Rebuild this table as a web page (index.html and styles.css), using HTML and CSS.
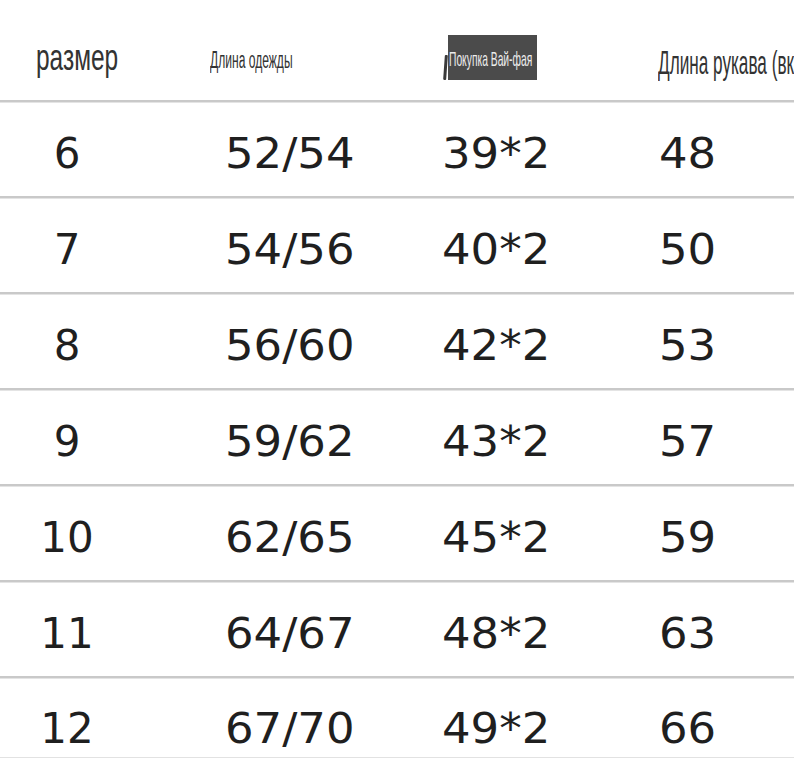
FILE: index.html
```html
<!DOCTYPE html>
<html lang="ru">
<head>
<meta charset="utf-8">
<title>Размеры</title>
<link rel="stylesheet" href="styles.css">
</head>
<body>
<div class="table">
  <div class="row head">
    <div class="cell h1"><span class="cond c-size">размер</span></div>
    <div class="cell h2"><span class="cond c-len">Длина одежды</span></div>
    <div class="cell h3"><span class="tag"><span class="cond c-tag">Покупка Вай-фая</span></span></div>
    <div class="cell h4"><span class="cond c-sleeve">Длина рукава (вк</span></div>
  </div>
  <div class="row"><div class="cell d1"><span class="num">6</span></div><div class="cell d2"><span class="num">52/54</span></div><div class="cell d3"><span class="num">39*2</span></div><div class="cell d4"><span class="num">48</span></div></div>
  <div class="row"><div class="cell d1"><span class="num">7</span></div><div class="cell d2"><span class="num">54/56</span></div><div class="cell d3"><span class="num">40*2</span></div><div class="cell d4"><span class="num">50</span></div></div>
  <div class="row"><div class="cell d1"><span class="num">8</span></div><div class="cell d2"><span class="num">56/60</span></div><div class="cell d3"><span class="num">42*2</span></div><div class="cell d4"><span class="num">53</span></div></div>
  <div class="row"><div class="cell d1"><span class="num">9</span></div><div class="cell d2"><span class="num">59/62</span></div><div class="cell d3"><span class="num">43*2</span></div><div class="cell d4"><span class="num">57</span></div></div>
  <div class="row"><div class="cell d1"><span class="num">10</span></div><div class="cell d2"><span class="num">62/65</span></div><div class="cell d3"><span class="num">45*2</span></div><div class="cell d4"><span class="num">59</span></div></div>
  <div class="row"><div class="cell d1"><span class="num">11</span></div><div class="cell d2"><span class="num">64/67</span></div><div class="cell d3"><span class="num">48*2</span></div><div class="cell d4"><span class="num">63</span></div></div>
  <div class="row last"><div class="cell d1"><span class="num">12</span></div><div class="cell d2"><span class="num">67/70</span></div><div class="cell d3"><span class="num">49*2</span></div><div class="cell d4"><span class="num">66</span></div></div>
</div>
</body>
</html>
```
FILE: styles.css
```css
html, body {
  margin: 0;
  padding: 0;
  background: #ffffff;
  overflow: hidden;
}
.table {
  width: 794px;
  display: flex;
  flex-direction: column;
}
.row {
  display: grid;
  grid-template-columns: 200px 230px 220px 1fr;
  height: 93px;
  border-bottom: 2px solid #c9c9c9;
  box-shadow: 0 1px 0 #e4e4e4;
  margin-bottom: 1px;
  align-items: center;
  font-family: "DejaVu Sans", Verdana, sans-serif;
  font-size: 42px;
  color: #1f1f1f;
  white-space: nowrap;
  overflow: hidden;
}
.row.head {
  height: 100px;
  align-items: start;
  font-family: "Liberation Sans", Arial, sans-serif;
  font-size: 16px;
  color: #333333;
}
.row.last {
  height: 78px;
  border-bottom: 1px solid #e2e2e2;
  box-shadow: none;
  align-items: start;
}
.cell {
  line-height: 1;
}
.num {
  display: inline-block;
}
.d1 {
  text-align: center;
  padding-right: 66px;
  padding-top: 8px;
}
.d2, .d3, .d4 { padding-top: 8px; }
.d2 .num, .d3 .num, .d4 .num {
  transform: scaleX(1.07);
  transform-origin: left center;
}
.d2 { padding-left: 25px; }
.d3 { padding-left: 12px; }
.d4 { padding-left: 9px; }
.last .cell { padding-top: 29px; }

.cond {
  display: block;
  width: max-content;
  line-height: 1;
  transform-origin: left center;
  white-space: nowrap;
}
.h1 { padding-left: 36px; padding-top: 40px; }
.c-size { font-size: 36px; transform: scaleX(0.68); }
.h2 { padding-left: 10px; padding-top: 49px; }
.c-len { font-size: 23px; transform: scaleX(0.525); }
.h3 { padding-left: 18px; padding-top: 35px; }
.tag {
  position: relative;
  display: flex;
  align-items: center;
  width: 89px;
  height: 45px;
  background: #4b4b4b;
  padding-left: 1px;
  padding-top: 2px;
  box-sizing: border-box;
}
.tag::before {
  content: "";
  position: absolute;
  left: -4px;
  top: 20px;
  width: 3px;
  height: 25px;
  background: #3a3a3a;
  border-radius: 1px;
  transform: rotate(4deg);
}
.c-tag { font-size: 21px; color: #ececec; transform: scaleX(0.49); }
.h4 { padding-left: 8px; padding-top: 45px; }
.c-sleeve { font-size: 34px; transform: scaleX(0.505); }
```
